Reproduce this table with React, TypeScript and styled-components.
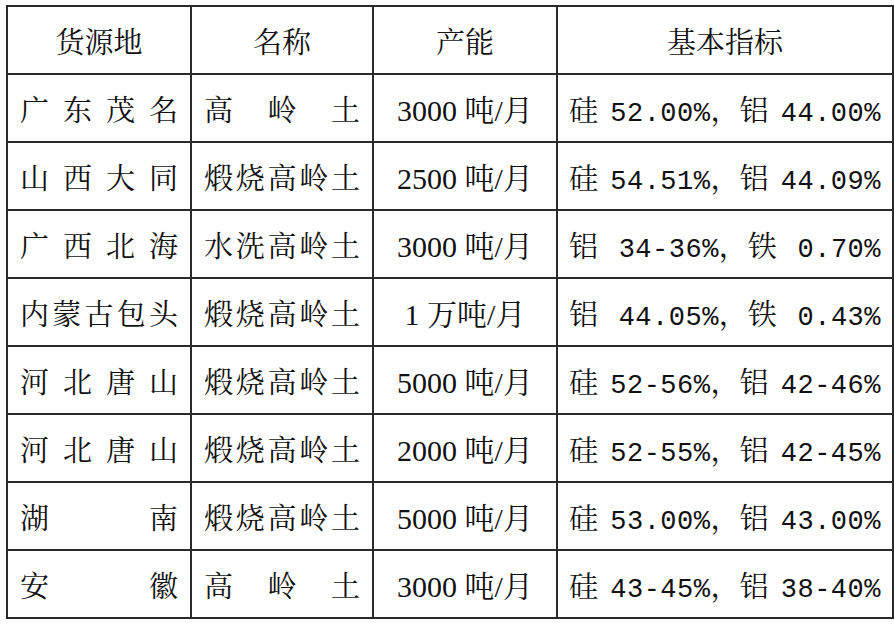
import React from "react"
import styled, { createGlobalStyle } from "styled-components"

const cjk = `"Noto Serif CJK SC", "Noto Sans CJK SC", serif`

type Row = {
  origin: string[]
  name: string[]
  capacity: string
  spec: [string, string, string, string]
}

const rows: Row[] = [
  { origin: ["广", "东", "茂", "名"], name: ["高", "岭", "土"], capacity: "3000 吨/月", spec: ["硅", "52.00%", "铝", "44.00%"] },
  { origin: ["山", "西", "大", "同"], name: ["煅", "烧", "高", "岭", "土"], capacity: "2500 吨/月", spec: ["硅", "54.51%", "铝", "44.09%"] },
  { origin: ["广", "西", "北", "海"], name: ["水", "洗", "高", "岭", "土"], capacity: "3000 吨/月", spec: ["铝", "34-36%", "铁", "0.70%"] },
  { origin: ["内", "蒙", "古", "包", "头"], name: ["煅", "烧", "高", "岭", "土"], capacity: "1 万吨/月", spec: ["铝", "44.05%", "铁", "0.43%"] },
  { origin: ["河", "北", "唐", "山"], name: ["煅", "烧", "高", "岭", "土"], capacity: "5000 吨/月", spec: ["硅", "52-56%", "铝", "42-46%"] },
  { origin: ["河", "北", "唐", "山"], name: ["煅", "烧", "高", "岭", "土"], capacity: "2000 吨/月", spec: ["硅", "52-55%", "铝", "42-45%"] },
  { origin: ["湖", "南"], name: ["煅", "烧", "高", "岭", "土"], capacity: "5000 吨/月", spec: ["硅", "53.00%", "铝", "43.00%"] },
  { origin: ["安", "徽"], name: ["高", "岭", "土"], capacity: "3000 吨/月", spec: ["硅", "43-45%", "铝", "38-40%"] },
]

const GlobalStyle = createGlobalStyle`
  html, body {
    margin: 0;
    padding: 0;
    background: #fff;
  }
`

const Page = styled.div`
  padding: 5px 0 0 6px;
`

const Table = styled.table`
  border-collapse: collapse;
  table-layout: fixed;
  width: 886px;
  color: #111;
  font-family: "Liberation Serif", ${cjk};
  font-size: 29px;
`

const Cell = styled.td<{ $wide?: boolean }>`
  border: 2px solid #2a2a2a;
  height: 64px;
  padding: 0 ${({ $wide }) => ($wide ? 11 : 12)}px;
  text-align: center;
  vertical-align: middle;
  white-space: nowrap;
`

const HeadCell = styled(Cell).attrs({ as: "th" })`
  font-weight: normal;
`

const Capacity = styled.span`
  font-size: 30px;
`

const Spread = styled.div`
  display: flex;
  justify-content: space-between;
  align-items: baseline;
`

const Num = styled.span`
  font-family: "Liberation Mono", ${cjk};
  font-size: 27px;
  letter-spacing: 0.5px;
`

const Row = styled.tr`
  height: 68px;
`

export default function App() {
  return (
    <Page>
      <GlobalStyle />
      <Table>
        <colgroup>
          <col style={{ width: 184 }} />
          <col style={{ width: 182 }} />
          <col style={{ width: 184 }} />
          <col style={{ width: 336 }} />
        </colgroup>
        <thead>
          <Row>
            <HeadCell>货源地</HeadCell>
            <HeadCell>名称</HeadCell>
            <HeadCell>产能</HeadCell>
            <HeadCell>基本指标</HeadCell>
          </Row>
        </thead>
        <tbody>
          {rows.map((r, i) => (
            <Row key={i}>
              <Cell>
                <Spread>{r.origin.map((c, j) => <span key={j}>{c}</span>)}</Spread>
              </Cell>
              <Cell>
                <Spread>{r.name.map((c, j) => <span key={j}>{c}</span>)}</Spread>
              </Cell>
              <Cell>
                <Capacity>{r.capacity}</Capacity>
              </Cell>
              <Cell $wide>
                <Spread>
                  <span>{r.spec[0]}</span>
                  <span>
                    <Num>{r.spec[1]}</Num>，{r.spec[2]}
                  </span>
                  <Num>{r.spec[3]}</Num>
                </Spread>
              </Cell>
            </Row>
          ))}
        </tbody>
      </Table>
    </Page>
  )
}
